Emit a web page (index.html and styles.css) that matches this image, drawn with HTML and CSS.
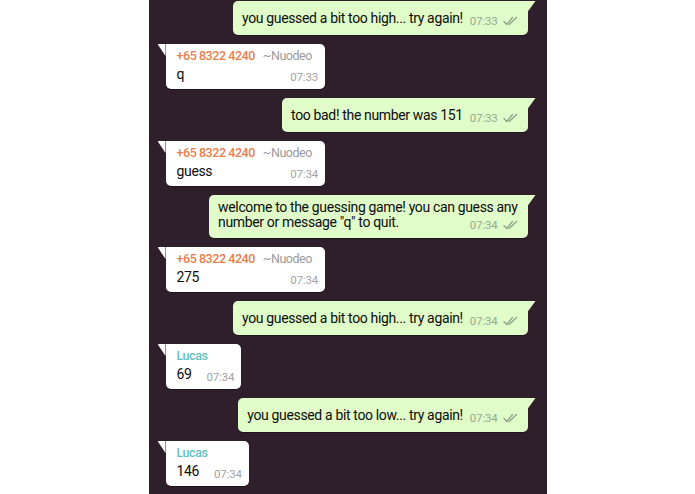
FILE: index.html
```html
<!DOCTYPE html>
<html lang="en">
<head>
<meta charset="utf-8">
<title>Guessing game chat</title>
<link rel="stylesheet" href="styles.css">
</head>
<body>
<main class="chat">
  <div class="msg out">
    <span class="text">you guessed a bit too high... try again!</span><span class="meta"><span class="time">07:33</span><svg class="ticks" viewBox="0 0 15 10" aria-hidden="true"><path d="M1 5.5 L3.8 8.5 L9.5 1.5 M6.2 8.5 L13.5 1.5"/></svg></span>
  </div>
  <div class="msg in">
    <div class="sender"><span class="name orange">+65 8322 4240</span><span class="alias">~Nuodeo</span></div>
    <div class="body"><span class="text">q</span><span class="time">07:33</span></div>
  </div>
  <div class="msg out">
    <span class="text">too bad! the number was 151</span><span class="meta"><span class="time">07:33</span><svg class="ticks" viewBox="0 0 15 10" aria-hidden="true"><path d="M1 5.5 L3.8 8.5 L9.5 1.5 M6.2 8.5 L13.5 1.5"/></svg></span>
  </div>
  <div class="msg in">
    <div class="sender"><span class="name orange">+65 8322 4240</span><span class="alias">~Nuodeo</span></div>
    <div class="body"><span class="text">guess</span><span class="time">07:34</span></div>
  </div>
  <div class="msg out wrap">
    <span class="text">welcome to the guessing game! you can guess any<br>number or message "q" to quit.</span><span class="meta"><span class="time">07:34</span><svg class="ticks" viewBox="0 0 15 10" aria-hidden="true"><path d="M1 5.5 L3.8 8.5 L9.5 1.5 M6.2 8.5 L13.5 1.5"/></svg></span>
  </div>
  <div class="msg in">
    <div class="sender"><span class="name orange">+65 8322 4240</span><span class="alias">~Nuodeo</span></div>
    <div class="body"><span class="text">275</span><span class="time">07:34</span></div>
  </div>
  <div class="msg out">
    <span class="text">you guessed a bit too high... try again!</span><span class="meta"><span class="time">07:34</span><svg class="ticks" viewBox="0 0 15 10" aria-hidden="true"><path d="M1 5.5 L3.8 8.5 L9.5 1.5 M6.2 8.5 L13.5 1.5"/></svg></span>
  </div>
  <div class="msg in">
    <div class="sender"><span class="name teal">Lucas</span></div>
    <div class="body"><span class="text">69</span><span class="time">07:34</span></div>
  </div>
  <div class="msg out">
    <span class="text">you guessed a bit too low... try again!</span><span class="meta"><span class="time">07:34</span><svg class="ticks" viewBox="0 0 15 10" aria-hidden="true"><path d="M1 5.5 L3.8 8.5 L9.5 1.5 M6.2 8.5 L13.5 1.5"/></svg></span>
  </div>
  <div class="msg in">
    <div class="sender"><span class="name teal">Lucas</span></div>
    <div class="body"><span class="text">146</span><span class="time">07:34</span></div>
  </div>
</main>
</body>
</html>
```

FILE: styles.css
```css
* {
  box-sizing: border-box;
}

html,
body {
  margin: 0;
  height: 100%;
  background: #ffffff;
}

body {
  font-family: Roboto, "Liberation Sans", Arial, sans-serif;
  color: #0d0d0d;
}

/* dark conversation column, centred on the white page */
.chat {
  width: 398px;
  height: 494px;
  margin: 0 auto;
  background: #2e1f2b;
  overflow: hidden;
  display: flex;
  flex-direction: column;
  gap: 9px;
  padding-top: 1px;
}

.msg {
  position: relative;
  font-size: 14px;
  letter-spacing: -0.35px;
  line-height: 20px;
  border-radius: 5px;
  box-shadow: 0 1px 0.5px rgba(0, 0, 0, 0.35);
  flex: none;
}

/* outgoing (own) messages */
.msg.out {
  align-self: flex-end;
  margin-right: 19px;
  max-width: 340px;
  background: #e0fcc8;
  border-top-right-radius: 0;
  padding: 7px 10px 7px 9px;
}

.msg.out::before {
  content: "";
  position: absolute;
  top: 0;
  left: 100%;
  width: 8px;
  height: 11px;
  background: inherit;
  clip-path: polygon(0 0, 100% 0, 75% 25%, 0 100%);
}

.msg.out .meta {
  display: inline-block;
  margin-left: 7px;
  line-height: 14px;
  vertical-align: -2px;
  white-space: nowrap;
}

.msg.out .time {
  color: #97aa91;
}

.ticks {
  width: 15px;
  height: 10px;
  margin-left: 5px;
  vertical-align: -1px;
  fill: none;
  stroke: #8ca188;
  stroke-width: 1.25;
  stroke-linecap: round;
  stroke-linejoin: round;
}

/* multi-line message: time sits at the right edge of the last line */
.msg.out.wrap {
  line-height: 15px;
  padding-top: 5px;
  padding-bottom: 6px;
}

.msg.out.wrap .meta {
  float: right;
  margin-top: 2px;
}

/* incoming (group member) messages */
.msg.in {
  align-self: flex-start;
  margin-left: 17px;
  background: #ffffff;
  border-top-left-radius: 0;
  padding: 3px 7px 5px 11px;
}

.msg.in::before {
  content: "";
  position: absolute;
  top: 0;
  right: 100%;
  width: 8px;
  height: 12px;
  background: inherit;
  clip-path: polygon(0 0, 100% 0, 100% 100%, 25% 25%);
}

.sender {
  display: flex;
  gap: 8px;
  font-size: 12.5px;
  letter-spacing: -0.45px;
  line-height: 17px;
  padding-right: 6px;
  white-space: nowrap;
}

.name {
  font-weight: 500;
}

.name.orange {
  color: #e5804d;
}

.name.teal {
  color: #65bfc0;
}

.alias {
  color: #9b9b9b;
}

.body {
  display: flex;
  justify-content: space-between;
  align-items: flex-end;
}

.time {
  font-size: 11.5px;
  letter-spacing: -0.2px;
  line-height: 14px;
  color: #a3a3a3;
}

.body .time {
  margin-left: 15px;
}
```
